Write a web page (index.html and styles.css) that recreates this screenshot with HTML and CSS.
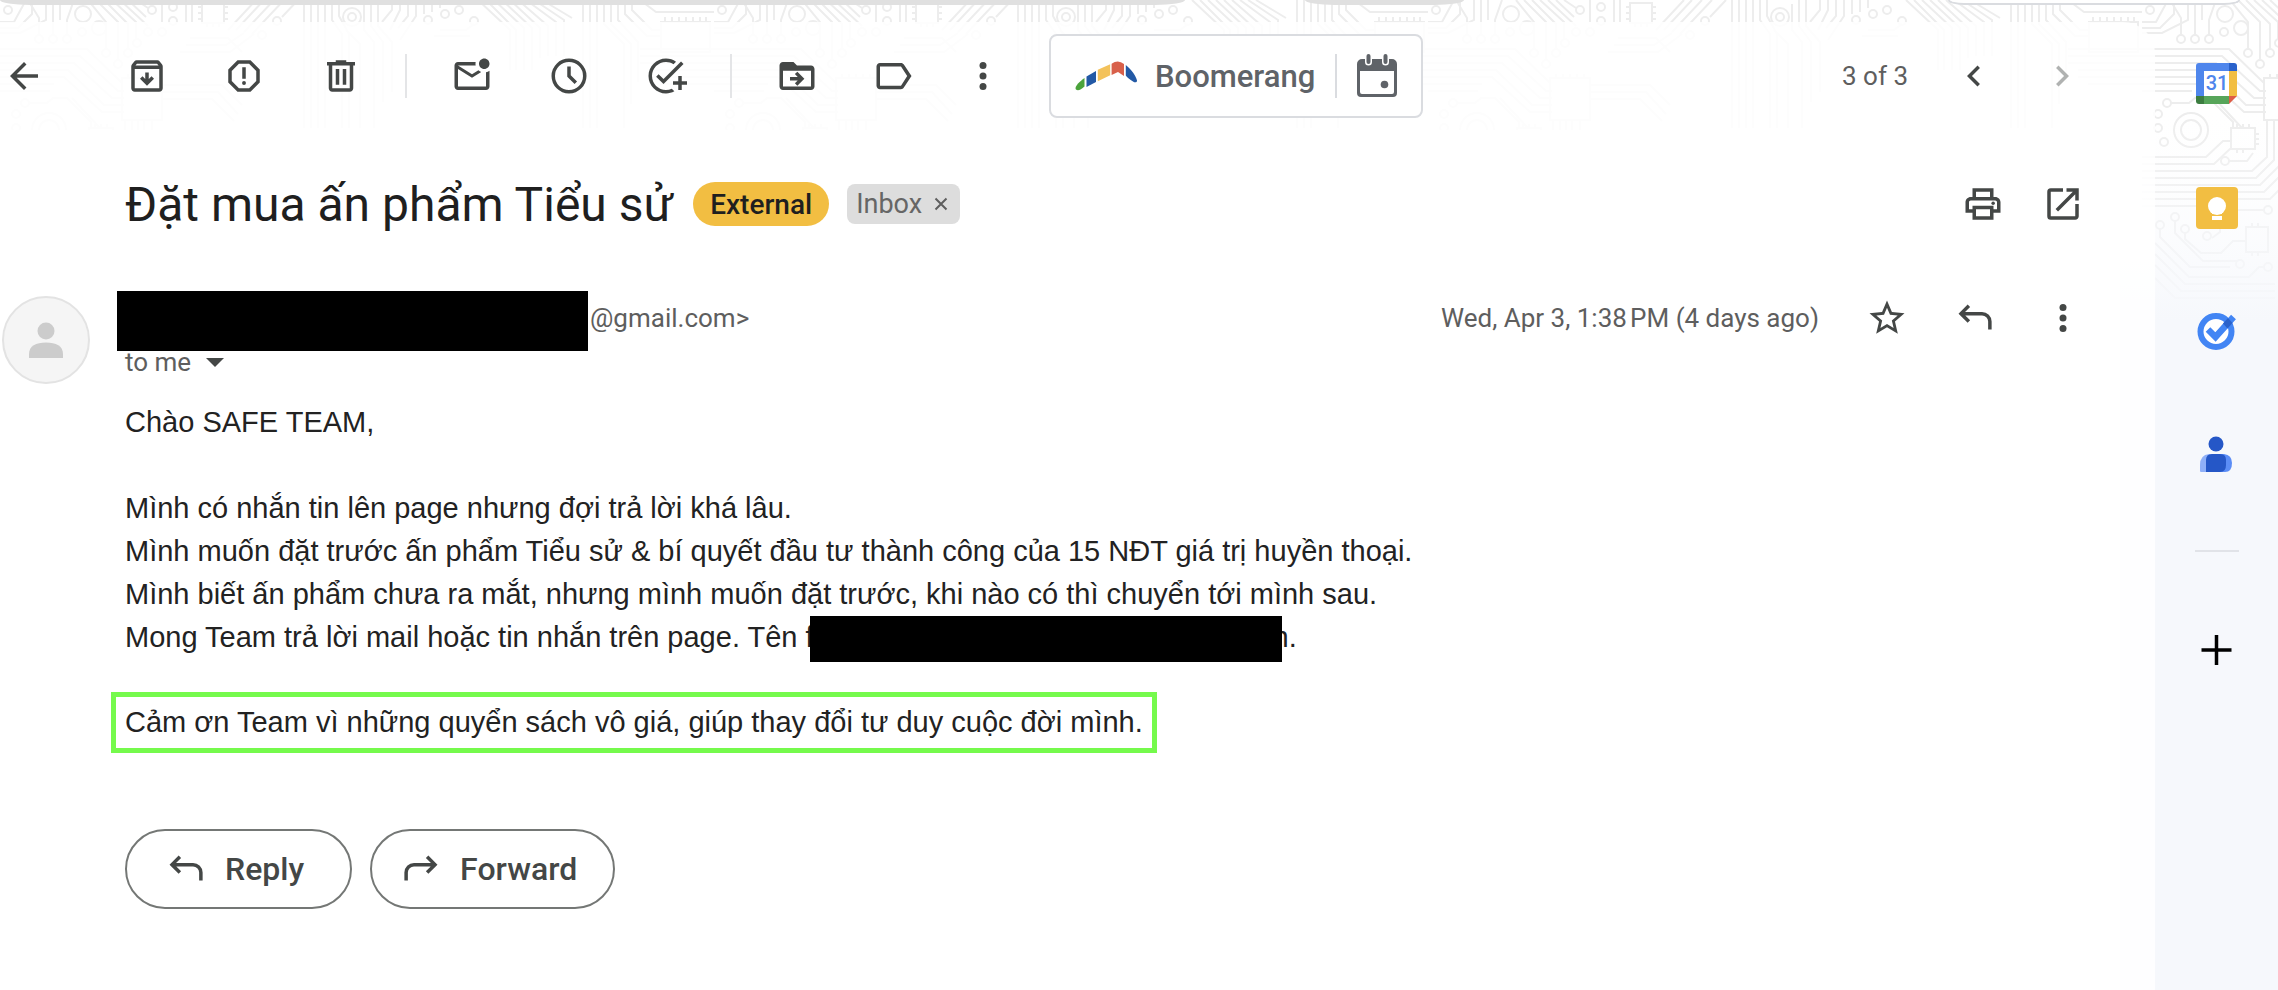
FILE: index.html
```html
<!DOCTYPE html>
<html lang="vi">
<head>
    <meta charset="UTF-8">
    <meta name="viewport" content="width=device-width, initial-scale=1.0">
    <title>Đặt mua ấn phẩm Tiểu sử</title>
    <link rel="stylesheet" href="styles.css">
</head>
<body>

    <!-- circuit board theme behind everything -->
    <svg class="theme" aria-hidden="true">
        <defs>
            <pattern id="circuit" width="714" height="330" patternUnits="userSpaceOnUse">
                <g fill="none" stroke="#ededed" stroke-width="2">
                    <circle cx="8" cy="10" r="4"/><circle cx="83" cy="14" r="8"/><circle cx="99" cy="28" r="7"/><circle cx="82" cy="32" r="4"/>
                    <circle cx="39" cy="39" r="4"/><circle cx="53" cy="39" r="4"/><circle cx="67" cy="39" r="4"/>
                    <circle cx="106" cy="53" r="4"/><circle cx="118" cy="64" r="4"/><circle cx="128" cy="53" r="4"/>
                    <circle cx="137" cy="43" r="4"/><circle cx="148" cy="32" r="4"/><circle cx="162" cy="32" r="4"/>
                    <circle cx="152" cy="10" r="4"/><circle cx="173" cy="7" r="4"/><circle cx="173" cy="21" r="4"/>
                    <circle cx="277" cy="21" r="4"/><circle cx="262" cy="35" r="4"/><circle cx="352" cy="17" r="4"/><circle cx="352" cy="17" r="9"/>
                    <circle cx="445" cy="14" r="4"/><circle cx="459" cy="10" r="4"/><circle cx="428" cy="20" r="4"/><circle cx="474" cy="21" r="4"/>
                    <path d="M39 35V18L28 0M53 35V0M67 35V20L74 0M60 0v20M46 0v20L20 33H0M32 0v14L18 28H0M26 0 14 22H0"/>
                    <path d="M96 0l22 22v38M104 0l24 24v25M88 0l18 22v27M112 0l24 22v17M120 0l28 26M128 0l18 17M136 0l12 8"/>
                    <path d="M186 0v22M192 0v22M162 0v22M202 3h22v20h-22zM202 7h-4M202 13h-4M202 19h-4M224 7h4M224 13h4M224 19h4M207 23v4M213 23v4M219 23v4"/>
                    <path d="M228 30 256 0M236 30 264 0M244 32 274 0M252 34 284 0M282 17l16-17M190 38h38l14 14M186 45h40l18-12M180 52h50l24-18"/>
                    <path d="M304 0v128M311 0v128M318 0v128M325 0v128M332 0v20l10 14v94M339 0v16l10 18v94M346 30l14 14v84M364 4v26l10 12v86M371 0v26l12 16v60M378 0v26l14 16v50"/>
                    <path d="M392 0v10l-10 12M400 0v10l-10 20M408 0v16l-10 12M416 0v16l-16 24M424 0v14M432 0v12M440 0v8M440 30h26l8-6M434 36h36M486 0l30 30v40M478 0l32 30v40M494 0l30 28v42M502 0l30 28v42M510 0l30 28v30M518 0l30 26v30M526 0l30 22v34M534 0l30 20v36M542 0l30 18"/>
                    <path d="M583 0v128M590 0v128M597 0v128M604 0v24l20 20v84M611 0v24l20 20v60M618 0v20l20 22v40M625 0v14l22 22h14M632 0v10l20 20h9"/>
                    <path d="M661 22v30h49V22zM665 22v-5M672 22v-5M679 22v-5M686 22v-5M693 22v-5M700 22v-5M706 22v-5M640 0l16 12h58"/>
                    <path d="M0 49h87l35 34M0 56h80l38 35h6M0 63h74l38 35h12M0 70h68l36 35h20M0 77h64l38 35h22M0 84h54M0 91h50M640 49h74M640 56h74M640 63h74M650 70h64M650 77h64M660 84h54"/>
                    <path d="M122 78h40v42h-40zM128 78v-4M135 78v-4M142 78v-4M149 78v-4M156 78v-4M162 85h60l20 20M162 92h56l20 22M162 99h50l22 22"/>
                    <circle cx="49" cy="130" r="17"/><circle cx="49" cy="130" r="10"/>
                    <circle cx="25" cy="103" r="4"/><circle cx="16" cy="114" r="4"/><circle cx="16" cy="128" r="4"/><circle cx="22" cy="142" r="4"/><circle cx="83" cy="161" r="4"/>
                    <path d="M29 103h18l6-5h14l24 24v6M72 98l28 30M89 128h24v21H89zM95 128v-4M101 128v-4M107 128v-4M95 149v4M101 149v4M113 134h4M113 139h4M113 144h4"/>
                    <path d="M0 157h64l17-16h8M0 164h72l17-16M87 161h18l6-8M0 171h110l15-14v-37M0 178h114l18-18v-40M0 185h118l20-20v-45M0 192h122l22-22v-50M0 199h128l24-24v-55M0 206h60"/>
                    <circle cx="18" cy="225" r="4"/><circle cx="33" cy="217" r="4"/><circle cx="43" cy="229" r="4"/><circle cx="65" cy="236" r="4"/><circle cx="126" cy="210" r="4"/><circle cx="98" cy="264" r="4"/><circle cx="126" cy="267" r="4"/>
                    <path d="M104 227h22v25h-22zM110 227v-4M116 227v-4M110 252v4M116 252v4M122 210h-30l-14 12v10l-8 6"/>
                    <path d="M18 229v8l30 30h40M33 221v12l28 28h34M43 233v6l16 14h20l12-12h13M13 243l34 34h60l10-10h6M13 254l30 30h90M13 265l26 26h94M13 278l20 20h100"/>
                </g>
            </pattern>
            <linearGradient id="fade" x1="0" y1="0" x2="0" y2="1">
                <stop offset="0" stop-color="#fff" stop-opacity="0"/>
                <stop offset="0.35" stop-color="#fdfdfe" stop-opacity="0"/>
                <stop offset="1" stop-color="#f6f8fc"/>
            </linearGradient>
        </defs>
        <rect width="100%" height="100%" fill="#fff"/>
        <rect width="100%" height="100%" fill="url(#circuit)"/>
        <rect width="100%" height="100%" fill="url(#fade)"/>
    </svg>

    <div class="searchbar">
        <div class="search-box"></div>
        <div class="search-chip"></div>
        <div class="account-box"></div>
    </div>

    <div class="layout">
        <main class="mail">
            <div class="toolbar">
                <button class="icon-btn back" aria-label="Back">
                    <svg viewBox="0 0 24 24"><path d="M20 11H7.83l5.59-5.59L12 4l-8 8 8 8 1.41-1.41L7.83 13H20z"/></svg>
                </button>
                <button class="icon-btn" aria-label="Archive">
                    <svg viewBox="0 0 24 24"><path d="M20.54 5.23l-1.39-1.68C18.88 3.21 18.47 3 18 3H6c-.47 0-.88.21-1.16.55L3.46 5.23C3.17 5.57 3 6.02 3 6.5V19c0 1.1.9 2 2 2h14c1.1 0 2-.9 2-2V6.5c0-.48-.17-.93-.46-1.27zM6.24 5h11.52l.83 1H5.42l.82-1zM5 19V8h14v11H5zm11-5.5l-4 4-4-4 1.41-1.41L11 13.67V10h2v3.67l1.59-1.58L16 13.5z"/></svg>
                </button>
                <button class="icon-btn" aria-label="Report spam">
                    <svg viewBox="0 0 24 24"><path d="M15.73 3H8.27L3 8.27v7.46L8.27 21h7.46L21 15.73V8.27L15.73 3zM19 14.9L14.9 19H9.1L5 14.9V9.1L9.1 5h5.8L19 9.1v5.8zM11 7h2v6.5h-2z"/><circle cx="12" cy="16" r="1.1"/></svg>
                </button>
                <button class="icon-btn" aria-label="Delete">
                    <svg viewBox="0 0 24 24"><path d="M15 4V3H9v1H4v2h1v13c0 1.1.9 2 2 2h10c1.1 0 2-.9 2-2V6h1V4h-5zm2 15H7V6h10v13zM9 8h2v9H9zm4 0h2v9h-2z"/></svg>
                </button>
                <span class="divider"></span>
                <button class="icon-btn" aria-label="Mark as unread">
                    <svg viewBox="0 0 24 24"><path d="M22 8.98V18c0 1.1-.9 2-2 2H4c-1.1 0-2-.9-2-2V6c0-1.1.9-2 2-2h10.1c-.06.32-.1.66-.1 1s.04.68.1 1H4l8 5 3.67-2.29c.47.43 1.02.76 1.63.98L12 13 4 8v10h16V9.9c.74-.15 1.42-.48 2-.92zM16 5c0 1.66 1.34 3 3 3s3-1.34 3-3-1.34-3-3-3-3 1.34-3 3z"/></svg>
                </button>
                <button class="icon-btn" aria-label="Snooze">
                    <svg viewBox="0 0 24 24"><path d="M12 2a10 10 0 1 0 0 20 10 10 0 0 0 0-20zm0 18a8 8 0 1 1 0-16 8 8 0 0 1 0 16zM11 6.5h2v5.1l3.6 3.6-1.4 1.4-4.2-4.2z"/></svg>
                </button>
                <button class="icon-btn" aria-label="Add to tasks">
                    <svg viewBox="0 0 24 24"><path d="M22 5.18L10.59 16.6l-4.24-4.24 1.41-1.41 2.83 2.83 10-10L22 5.18zM12 20c-4.41 0-8-3.59-8-8s3.59-8 8-8c1.57 0 3.04.46 4.28 1.25l1.45-1.45C16.1 2.67 14.13 2 12 2 6.48 2 2 6.48 2 12s4.48 10 10 10c1.73 0 3.36-.44 4.78-1.22l-1.5-1.5c-1 .46-2.11.72-3.28.72zm7-5h-3v2h3v3h2v-3h3v-2h-3v-3h-2v3z"/></svg>
                </button>
                <span class="divider"></span>
                <button class="icon-btn" aria-label="Move to">
                    <svg viewBox="0 0 24 24"><path d="M20 6h-8l-2-2H4c-1.1 0-2 .9-2 2v12c0 1.1.9 2 2 2h16c1.1 0 2-.9 2-2V8c0-1.1-.9-2-2-2zm0 12H4V9h16v9zM12.2 9.5l-1.4 1.4 1.6 1.6H8v2h4.4l-1.6 1.6 1.4 1.4 4-4z"/></svg>
                </button>
                <button class="icon-btn" aria-label="Labels">
                    <svg viewBox="0 0 24 24"><path d="M17.63 5.38C17.27 4.83 16.67 4.500 16 4.500H4c-1.100 0-2 .9-2 2v11c0 1.100.9 2 2 2h12c.67 0 1.270-.33 1.630-.88L22 12l-4.370-6.620zM16 17.500H4v-11h12l3.550 5.500L16 17.500z"/></svg>
                </button>
                <button class="icon-btn more" aria-label="More">
                    <svg viewBox="0 0 24 24"><circle cx="12" cy="6" r="2"/><circle cx="12" cy="12" r="2"/><circle cx="12" cy="18" r="2"/></svg>
                </button>

                <div class="boomerang">
                    <button class="boomerang-main">
                        <svg class="boomerang-logo" viewBox="0 0 62 30">
                            <path fill="#4ba33b" d="M1 28.500C-1 26 4 21 9.500 17v8.500C6 28.500 3 30.500 1 28.500z"/>
                            <path fill="#2359a5" d="M11.500 15.500 21 10v11l-9.500 5z"/>
                            <path fill="#f3c25b" d="M22.800 8.800 35.200 3.200v11l-12.400 6z"/>
                            <path fill="#d8604a" d="M36.600 2.800Q43-2 49 3v12l-6-4-6.400 3z"/>
                            <path fill="#2359a5" d="M50.800 4C57 9 61 15 62 19.500c.2 2-2 2.500-4 1-3-2-6-4-7.200-6z"/>
                        </svg>
                        Boomerang
                    </button>
                    <button class="boomerang-cal" aria-label="Boomerang calendar">
                        <svg viewBox="0 0 40 44"><path fill-rule="evenodd" d="M5 5h3v3a3.500 3.500 0 0 0 7 0V5h10v3a3.500 3.500 0 0 0 7 0V5h3a5 5 0 0 1 5 5v29a4 4 0 0 1-4 4H4a4 4 0 0 1-4-4V10a5 5 0 0 1 5-5zM3 17v21a2 2 0 0 0 2 2h30a2 2 0 0 0 2-2V17z"/><rect x="9.500" y="0" width="4" height="10" rx="2"/><rect x="26.500" y="0" width="4" height="10" rx="2"/><circle cx="27.500" cy="30.500" r="3.800"/></svg>
                    </button>
                </div>

                <span class="count">3 of 3</span>
                <button class="icon-btn nav" aria-label="Newer">
                    <svg viewBox="0 0 24 24"><path d="M15.41 7.41 14 6l-6 6 6 6 1.410-1.410L10.830 12z"/></svg>
                </button>
                <button class="icon-btn nav" aria-label="Older" disabled>
                    <svg viewBox="0 0 24 24"><path d="M8.590 16.590 10 18l6-6-6-6-1.410 1.410L13.170 12z"/></svg>
                </button>
            </div>

            <div class="content">
                <div class="subject">
                    <h1>Đặt mua ấn phẩm Tiểu sử</h1>
                    <span class="tag external">External</span>
                    <span class="tag inbox">Inbox
                        <button aria-label="Remove label Inbox"><svg viewBox="0 0 14 14"><path d="M1.500 1.500l11 11M12.500 1.500l-11 11"/></svg></button>
                    </span>
                    <div class="subject-actions">
                        <button class="icon-btn small" aria-label="Print all">
                            <svg viewBox="0 0 24 24"><path d="M19 8h-1V3H6v5H5c-1.660 0-3 1.340-3 3v6h4v4h12v-4h4v-6c0-1.660-1.340-3-3-3zM8 5h8v3H8V5zm8 12v2H8v-4h8v2zm2-2v-2H6v2H4v-4c0-.55.45-1 1-1h14c.55 0 1 .45 1 1v4h-2z"/><circle cx="17.800" cy="11.500" r="1"/></svg>
                        </button>
                        <button class="icon-btn small" aria-label="In new window">
                            <svg viewBox="0 0 24 24"><path d="M19 19H5V5h7V3H5a2 2 0 0 0-2 2v14a2 2 0 0 0 2 2h14c1.100 0 2-.9 2-2v-7h-2v7zM14 3v2h3.590l-9.830 9.830 1.410 1.410L19 6.410V10h2V3h-7z"/></svg>
                        </button>
                    </div>
                </div>

                <div class="message-head">
                    <div class="avatar">
                        <svg viewBox="0 0 36 36"><circle cx="18" cy="9" r="8.500"/><path d="M1 36v-4c0-8 7-11.500 17-11.500S35 24 35 32v4z"/></svg>
                    </div>
                    <div class="sender">
                        <div class="sender-row">
                            <span class="redacted name"></span>
                            <span class="email">@gmail.com&gt;</span>
                            <span class="date">Wed, Apr 3, 1:38&#8239;PM (4 days ago)</span>
                            <button class="icon-btn nav" aria-label="Star">
                                <svg viewBox="0 0 24 24"><path d="M22 9.240l-7.190-.62L12 2 9.190 8.630 2 9.240l5.460 4.730L5.820 21 12 17.270 18.180 21l-1.630-7.030L22 9.240zM12 15.400l-3.760 2.270 1-4.280-3.320-2.880 4.380-.38L12 6.100l1.710 4.040 4.380.38-3.320 2.880 1 4.280L12 15.400z"/></svg>
                            </button>
                            <button class="icon-btn nav" aria-label="Reply">
                                <svg class="line" viewBox="0 0 24 24"><path d="M8.500 5 4 9.500 8.500 14M4 9.500h12a4.500 4.500 0 0 1 4.500 4.500v4.500"/></svg>
                            </button>
                            <button class="icon-btn nav" aria-label="More">
                                <svg viewBox="0 0 24 24"><circle cx="12" cy="6" r="2"/><circle cx="12" cy="12" r="2"/><circle cx="12" cy="18" r="2"/></svg>
                            </button>
                        </div>
                        <button class="to-me">to me <span class="caret"></span></button>
                    </div>
                </div>

                <div class="message-body">
                    <p>Chào SAFE TEAM,</p>
                    <p>
                        Mình có nhắn tin lên page nhưng đợi trả lời khá lâu.<br>
                        Mình muốn đặt trước ấn phẩm Tiểu sử &amp; bí quyết đầu tư thành công của 15 NĐT giá trị huyền thoại.<br>
                        Mình biết ấn phẩm chưa ra mắt, nhưng mình muốn đặt trước, khi nào có thì chuyển tới mình sau.<br>
                        Mong Team trả lời mail hoặc tin nhắn trên page. Tên f<span class="redacted account"></span>n.
                    </p>
                    <p class="highlight">Cảm ơn Team vì những quyển sách vô giá, giúp thay đổi tư duy cuộc đời mình.</p>
                </div>

                <div class="actions">
                    <button class="pill">
                        <svg class="line" viewBox="0 0 24 24"><path d="M8.500 5 4 9.500 8.500 14M4 9.500h12a4.500 4.500 0 0 1 4.500 4.500v4.500"/></svg>
                        Reply
                    </button>
                    <button class="pill forward">
                        <svg class="line" viewBox="0 0 24 24"><path d="M15.500 5 20 9.500 15.500 14M20 9.500H8A4.500 4.500 0 0 0 3.500 14v4.500"/></svg>
                        Forward
                    </button>
                </div>
            </div>
        </main>

        <aside class="side-panel">
            <button aria-label="Calendar">
                <svg viewBox="0 0 42 42">
                    <rect x="8" y="8" width="25" height="25" fill="#fff"/>
                    <path fill="#4f86ec" d="M3 0h30v8H8v25H0V3a3 3 0 0 1 3-3z"/>
                    <path fill="#2a62cb" d="M33 0h5a3 3 0 0 1 3 3v5h-8z"/>
                    <path fill="#f2be42" d="M33 8h8v25h-8z"/>
                    <path fill="#57a55a" d="M8 33h25v8H8z"/>
                    <path fill="#3c7d40" d="M0 33h8v8H3a3 3 0 0 1-3-3z"/>
                    <path fill="#de5c46" d="M33 33h8l-8 8z"/>
                    <text x="21" y="27" text-anchor="middle" class="cal-day">31</text>
                </svg>
            </button>
            <button aria-label="Keep">
                <svg viewBox="0 0 42 42">
                    <rect width="42" height="42" rx="4" fill="#f2be42"/>
                    <circle cx="21" cy="19" r="9" fill="#fff"/>
                    <path fill="#fff" d="M16 23h10v4H16zM16 29h10v4H16z"/>
                </svg>
            </button>
            <button aria-label="Tasks">
                <svg viewBox="0 0 42 42">
                    <circle cx="20" cy="20.500" r="15.500" fill="#fff" stroke="#4285f4" stroke-width="6"/>
                    <path d="M12 18.500l7.500 7.500L37.500 6" fill="none" stroke="#4285f4" stroke-width="6.500"/>
                    <path d="M27 12.500l5-5.500 4.500 5-5 5.500z" fill="#2a62cb"/>
                </svg>
            </button>
            <button aria-label="Contacts">
                <svg viewBox="0 0 42 42">
                    <circle cx="20" cy="9" r="7.500" fill="#2557c7"/>
                    <path fill="#8fb0f8" d="M4 36v-6q0-10 9-11h14v18H5q-1 0-1-1z"/>
                    <path fill="#5b8df6" d="M23 19h5q8 1 8 9 0 9-7 9h-6z"/>
                    <path fill="#2557c7" d="M16 19h8q6 0 6 6v5q0 7-6 7H10V25q0-6 6-6z"/>
                </svg>
            </button>
            <hr>
            <button aria-label="Get add-ons">
                <svg viewBox="0 0 42 42"><path d="M5.500 21h30M20.500 6v30" stroke="#000" stroke-width="3.500"/></svg>
            </button>
        </aside>
    </div>

</body>
</html>
```
FILE: styles.css
```css
* {
    margin: 0;
    padding: 0;
    box-sizing: border-box;
}

body {
    min-height: 100vh;
    display: flex;
    flex-direction: column;
    position: relative;
    background-color: #f6f8fc;
    color: #1f1f1f;
    font-family: Roboto, Arial, sans-serif;
    font-size: 26px;
    overflow-x: hidden;
}

button {
    background: none;
    border: none;
    color: inherit;
    font: inherit;
    cursor: pointer;
}

svg {
    display: block;
    fill: currentColor;
}

.theme {
    position: absolute;
    top: 0;
    left: 0;
    width: 100%;
    height: 320px;
    z-index: -1;
}

/* bottom edge of the search row */
.searchbar {
    height: 22px;
    display: flex;
    align-items: flex-start;
}

.search-box,
.search-chip {
    height: 5px;
    background-color: #e0e0e0;
    border-radius: 0 0 30px 30px / 0 0 5px 5px;
}

.search-box {
    width: 52%;
}

.search-chip {
    width: 7%;
    margin-left: 120px;
}

.account-box {
    width: 292px;
    height: 5px;
    margin-left: auto;
    margin-right: 38px;
    background-color: #fff;
    border: 2px solid #dadce0;
    border-top: none;
    border-radius: 0 0 16px 16px / 0 0 5px 5px;
}

.layout {
    flex: 1;
    display: grid;
    grid-template-columns: 1fr 123px;
}

.mail {
    background-color: rgba(255, 255, 255, 0.86);
    border-radius: 0 32px 0 0;
}

.toolbar {
    height: 108px;
    display: flex;
    align-items: center;
    padding-right: 49px;
    color: #444746;
}

.icon-btn {
    width: 97px;
    height: 54px;
    display: flex;
    align-items: center;
    justify-content: center;
    color: #444746;
}

.icon-btn svg {
    width: 42px;
    height: 42px;
}

.icon-btn.back {
    width: 48px;
    margin-right: 50px;
}

.icon-btn.more {
    width: 82px;
}

.icon-btn.nav {
    width: 88px;
}

.icon-btn.small {
    width: 80px;
}

.icon-btn:disabled {
    color: #b0b2b1;
}

.line {
    fill: none;
    stroke: currentColor;
    stroke-width: 2;
}

.divider {
    width: 2px;
    height: 44px;
    margin: 0 16px;
    background-color: #e4e5e7;
}

.boomerang {
    height: 84px;
    display: flex;
    align-items: center;
    margin-left: 25px;
    background-color: #fff;
    border: 2px solid #dadce0;
    border-radius: 8px;
    color: #5f6368;
}

.boomerang-main {
    display: flex;
    align-items: center;
    gap: 18px;
    padding: 0 20px 0 24px;
    font-size: 31px;
    font-weight: 500;
}

.boomerang-logo {
    width: 62px;
    height: 30px;
}

.boomerang-cal {
    height: 44px;
    padding: 0 24px 0 20px;
    border-left: 2px solid #dadce0;
}

.boomerang-cal svg {
    width: 40px;
    height: 44px;
}

.count {
    margin-left: auto;
    margin-right: 22px;
    color: #5e5e5e;
}

.content {
    min-height: 860px;
    margin-right: 35px;
    background-color: #fff;
}

.subject {
    height: 148px;
    display: flex;
    align-items: center;
    padding-left: 125px;
}

.subject h1 {
    margin-right: 20px;
    font-size: 48px;
    font-weight: 400;
}

.tag {
    display: flex;
    align-items: center;
}

.external {
    height: 44px;
    padding: 0 17px;
    margin-right: 18px;
    border-radius: 22px;
    background-color: #f2be42;
    font-size: 28px;
    font-weight: 500;
}

.inbox {
    height: 40px;
    gap: 12px;
    padding: 0 12px 0 9px;
    border-radius: 8px;
    background-color: #ddd;
    color: #666;
    font-size: 27px;
}

.inbox svg {
    width: 14px;
    height: 14px;
    stroke: #5e5e5e;
    stroke-width: 2;
}

.subject-actions {
    display: flex;
    margin-left: auto;
    margin-right: 17px;
}

.message-head {
    display: flex;
    padding: 13px 13px 0 2px;
}

.avatar {
    width: 88px;
    height: 88px;
    display: flex;
    align-items: center;
    justify-content: center;
    margin: 5px 27px 0 0;
    border: 2px solid #e3e3e3;
    border-radius: 50%;
    background-color: #f5f5f5;
    color: #ccc;
}

.avatar svg {
    width: 36px;
    height: 36px;
}

.sender {
    flex: 1;
    color: #5e5e5e;
}

.sender-row {
    display: flex;
    align-items: flex-start;
    line-height: 54px;
}

.redacted {
    background-color: #000;
}

.redacted.name {
    width: 471px;
    height: 60px;
}

.email {
    margin-left: 2px;
}

.date {
    margin-left: auto;
    margin-right: 24px;
}

.to-me {
    display: flex;
    align-items: center;
    gap: 15px;
    padding-left: 8px;
    line-height: 22px;
}

.caret {
    border: 9px solid transparent;
    border-top-color: #444746;
    border-bottom: none;
}

.message-body {
    padding: 17px 0 0 125px;
    font-family: "Liberation Sans", Arial, sans-serif;
    font-size: 29px;
    line-height: 43px;
    color: #222;
}

.message-body p {
    margin-bottom: 43px;
}

.redacted.account {
    display: inline-block;
    width: 472px;
    height: 46px;
    margin: 0 -9px -3px -4px;
    position: relative;
    vertical-align: top;
}

.message-body .highlight {
    width: fit-content;
    margin: -10px 0 0 -14px;
    padding: 4px 9px;
    border: 5px solid #75fa4c;
}

.actions {
    display: flex;
    gap: 18px;
    padding: 76px 0 0 125px;
}

.pill {
    height: 80px;
    display: flex;
    align-items: center;
    gap: 18px;
    padding: 0 46px 0 38px;
    border: 2px solid #747775;
    border-radius: 40px;
    color: #444746;
    font-size: 32px;
    font-weight: 500;
}

.pill.forward {
    padding: 0 36px 0 28px;
}

.pill svg {
    width: 42px;
    height: 42px;
}

.side-panel {
    display: flex;
    flex-direction: column;
    align-items: center;
}

.side-panel button {
    width: 123px;
    height: 124px;
    display: flex;
    align-items: center;
    justify-content: center;
}

.side-panel button svg {
    width: 42px;
    height: 42px;
}

.side-panel hr {
    width: 44px;
    height: 2px;
    margin: 32px 0 36px;
    border: none;
    background-color: #e1e3e8;
}

.cal-day {
    font-size: 20px;
    font-weight: 500;
    fill: #4f86ec;
}
```
